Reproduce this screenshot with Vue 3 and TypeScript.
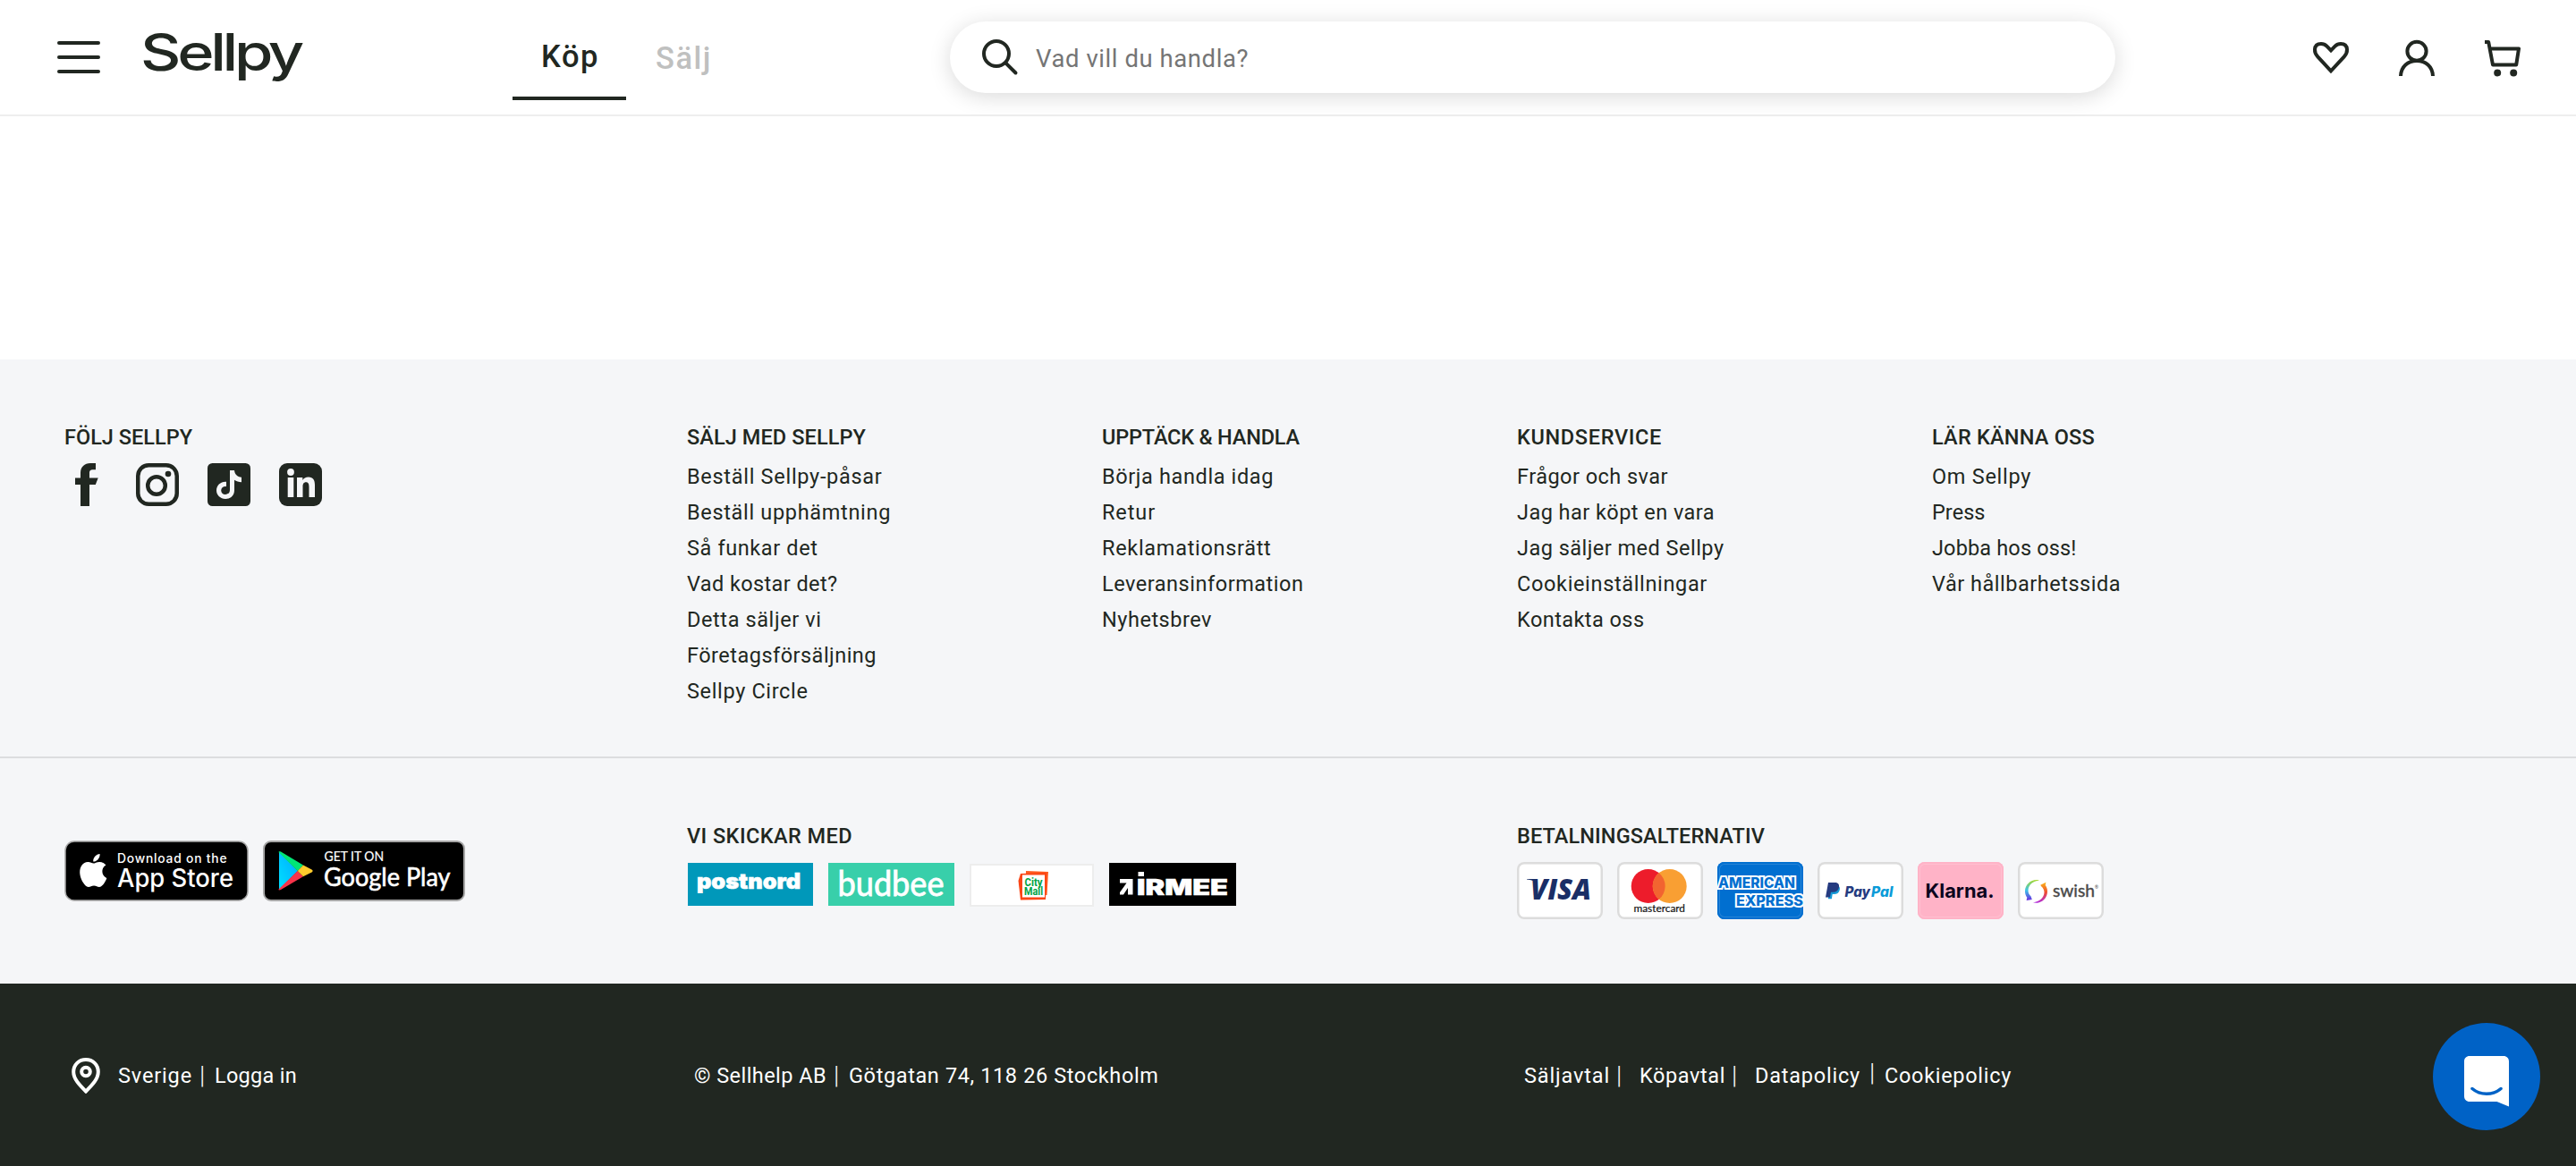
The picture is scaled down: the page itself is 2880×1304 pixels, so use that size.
<script setup lang="ts">
interface FittedText {
  text: string
  width: number
}
interface LinkColumn {
  title: FittedText
  links: FittedText[]
}

const t = (text: string, width: number): FittedText => ({ text, width })

// Tracks a label so that it takes up the given advance width.
function track(el: HTMLElement, width: number) {
  el.style.letterSpacing = '0px'
  const natural = el.getBoundingClientRect().width
  const count = (el.textContent ?? '').trim().length
  if (count > 0) el.style.letterSpacing = `${((width - natural) / count).toFixed(3)}px`
}
const vFit = {
  mounted: (el: HTMLElement, binding: { value: number }) => track(el, binding.value),
}

const columns: LinkColumn[] = [
  {
    title: t('SÄLJ MED SELLPY', 200),
    links: [
      t('Beställ Sellpy-påsar', 218.5),
      t('Beställ upphämtning', 228),
      t('Så funkar det', 146.5),
      t('Vad kostar det?', 168.5),
      t('Detta säljer vi', 150.5),
      t('Företagsförsäljning', 212),
      t('Sellpy Circle', 135.5),
    ],
  },
  {
    title: t('UPPTÄCK & HANDLA', 221),
    links: [
      t('Börja handla idag', 192),
      t('Retur', 60),
      t('Reklamationsrätt', 189.5),
      t('Leveransinformation', 225.5),
      t('Nyhetsbrev', 123),
    ],
  },
  {
    title: t('KUNDSERVICE', 162),
    links: [
      t('Frågor och svar', 169),
      t('Jag har köpt en vara', 221),
      t('Jag säljer med Sellpy', 231.5),
      t('Cookieinställningar', 213),
      t('Kontakta oss', 142.5),
    ],
  },
  {
    title: t('LÄR KÄNNA OSS', 182),
    links: [
      t('Om Sellpy', 111),
      t('Press', 59.5),
      t('Jobba hos oss!', 161.5),
      t('Vår hållbarhetssida', 211),
    ],
  },
]
</script>

<template>
  <div class="page">
    <header class="header">
      <button class="menu" aria-label="Meny"><i></i><i></i><i></i></button>
      <svg class="logo" width="184" height="80" viewBox="0 0 184 80">
        <text x="-1" y="48" textLength="179" lengthAdjust="spacingAndGlyphs">Sellpy</text>
      </svg>
      <nav class="tabs">
        <a class="tab active"><span v-fit="65">Köp</span></a>
        <a class="tab"><span v-fit="63">Sälj</span></a>
      </nav>
      <div class="search">
        <svg width="48" height="48" viewBox="0 0 48 48" fill="none" stroke="#212721" stroke-width="4" stroke-linecap="round">
          <circle cx="20" cy="20" r="14" />
          <path d="M30.3 30.3 41.500 41.500" />
        </svg>
        <span v-fit="238" class="placeholder">Vad vill du handla?</span>
      </div>
      <div class="actions">
        <svg width="48" height="48" viewBox="0 0 48 48" fill="none" stroke="#212721" stroke-width="4">
          <path d="M24 39.3 9.2 23.4C6.8 20.8 5.8 18.3 6 15.2 6.3 10.700 9.200 9 13 9c2.600 0 4.400.7 6.400 2.700L24 16.300l4.600-4.600C30.600 9.700 32.400 9 35 9c3.800 0 6.700 1.700 7 6.200.2 3.100-.8 5.600-3.200 8.200Z" />
        </svg>
        <svg width="48" height="48" viewBox="0 0 48 48" fill="none" stroke="#212721" stroke-width="4">
          <ellipse cx="24" cy="17.300" rx="10.600" ry="10.500" />
          <path d="M6 45C6.500 34.500 14 28 24 28s17.500 6.500 18 17" />
        </svg>
        <svg width="48" height="48" viewBox="0 0 48 48" fill="none" stroke="#212721" stroke-width="4" stroke-linejoin="round">
          <path d="M4 7h4.200l4.800 25.500h26.200L42 14.500H10" />
          <circle cx="18.200" cy="41.500" r="4" fill="#212721" stroke="none" />
          <circle cx="36.200" cy="41.500" r="4" fill="#212721" stroke="none" />
        </svg>
      </div>
    </header>

    <main class="content"></main>

    <footer>
      <section class="links">
        <div>
          <h4><span v-fit="143">FÖLJ SELLPY</span></h4>
          <div class="social">
            <svg width="48" height="48" viewBox="0 0 48 48" fill="#212721">
              <path d="M18 48V24h-6v-7.500h6V11C18 4 22.500 0 29 0h6v7.200h-3.500c-2.500 0-3.500 1.300-3.500 3.600v5.700h9.700L34.800 24H28v24Z" />
            </svg>
            <svg width="48" height="48" viewBox="0 0 48 48" fill="none" stroke="#212721" stroke-width="4.500">
              <rect x="2.250" y="2.250" width="43.500" height="43.500" rx="12" />
              <circle cx="23" cy="25" r="9.800" />
              <circle cx="36" cy="12" r="3.300" fill="#212721" stroke="none" />
            </svg>
            <svg width="48" height="48" viewBox="0 0 48 48">
              <rect width="48" height="48" rx="5.500" fill="#212721" />
              <path d="M25 8h5c.4 4.300 3.200 7.400 8 7.800v5.400c-3 0-5.700-.9-8-2.500v11.500C30 36.500 25.500 40 20 40S10 35.700 10 30.500c0-5.800 4.800-10.300 11-9.800v5.300c-3.200-.5-5.800 1.500-5.800 4.400 0 2.600 2 4.500 4.700 4.500 3 0 5.100-1.900 5.100-5Z" fill="#f5f6f8" />
            </svg>
            <svg width="48" height="48" viewBox="0 0 48 48">
              <rect width="48" height="48" rx="9" fill="#212721" />
              <g fill="#f5f6f8">
                <circle cx="13" cy="10" r="3.900" />
                <path d="M9.700 16h6.600v22H9.700ZM20 16h6.300v3c1.200-2 3.500-3.500 6.500-3.500 5.500 0 7.200 3.600 7.200 9V38h-6.500V26.500c0-3-.6-5.300-3.300-5.300-2.900 0-3.700 2.200-3.700 5.200V38H20Z" />
              </g>
            </svg>
          </div>
        </div>
        <div v-for="col in columns" :key="col.title.text">
          <h4><span v-fit="col.title.width">{{ col.title.text }}</span></h4>
          <ul>
            <li v-for="link in col.links" :key="link.text"><span v-fit="link.width">{{ link.text }}</span></li>
          </ul>
        </div>
      </section>

      <section class="partners">
        <div class="stores">
          <svg width="206" height="68" viewBox="0 0 206 68">
            <rect x="1" y="1" width="204" height="66" rx="10" stroke="#a6a6a6" stroke-width="1.500" />
            <path transform="translate(13.800 15) scale(1.540)" fill="#fff" d="M12.152 6.896c-.948 0-2.415-1.078-3.960-1.040-2.040.027-3.910 1.183-4.961 3.014-2.117 3.675-.546 9.103 1.519 12.090 1.013 1.454 2.208 3.090 3.792 3.039 1.520-.065 2.090-.987 3.935-.987 1.831 0 2.350.987 3.960.948 1.637-.026 2.676-1.480 3.676-2.948 1.156-1.688 1.636-3.325 1.662-3.415-.039-.013-3.182-1.221-3.220-4.857-.026-3.040 2.480-4.494 2.597-4.559-1.429-2.090-3.623-2.324-4.390-2.376-2-.156-3.675 1.090-4.610 1.090zM15.530 3.830c.843-1.012 1.400-2.427 1.245-3.830-1.207.052-2.662.805-3.532 1.818-.78.896-1.454 2.338-1.273 3.714 1.338.104 2.715-.688 3.559-1.701" />
            <g fill="#fff" font-family="Inter, sans-serif" font-weight="500">
              <text x="59" y="25" font-size="13.800" textLength="122.500">Download on the</text>
              <text x="59" y="52" font-size="28" textLength="130" lengthAdjust="spacingAndGlyphs">App Store</text>
            </g>
          </svg>
          <svg width="226" height="68" viewBox="0 0 226 68">
            <defs>
              <linearGradient id="play-blue" x1="1" y1="0" x2="0" y2="1">
                <stop offset="0" stop-color="#00a8ff" />
                <stop offset="1" stop-color="#00e0ff" />
              </linearGradient>
            </defs>
            <rect x="1" y="1" width="224" height="66" rx="8" stroke="#a6a6a6" stroke-width="2" />
            <path d="M18 12.500 39 34 18 55Z" fill="url(#play-blue)" />
            <path d="M17.500 13c0-1 1.500-1 2.500-.4L45 27.500 38.700 34Z" fill="#00e676" />
            <path d="M17.500 54.500c0 1.200 1.500 1 2.500.4L45 40.200 38.700 34Z" fill="#f8334a" />
            <path d="M45 27.500 54.500 32.500c1.500.9 1.500 2 0 2.900L45 40.200 38.700 34Z" fill="#ffcb2d" />
            <g fill="#fff" stroke="#fff" font-family="Lato, sans-serif">
              <text x="68.500" y="23" font-size="14.500" stroke-width=".2" textLength="66.500" lengthAdjust="spacingAndGlyphs">GET IT ON</text>
              <text x="68" y="51" font-size="28.500" stroke-width=".6" textLength="141.500" lengthAdjust="spacingAndGlyphs">Google Play</text>
            </g>
          </svg>
        </div>

        <div>
          <h4><span v-fit="185">VI SKICKAR MED</span></h4>
          <div class="carriers">
            <svg width="140" height="48" viewBox="0 0 140 48">
              <rect width="140" height="48" fill="#0098ba" />
              <text x="10" y="29.300" fill="#fff" stroke="#fff" stroke-width=".6" font-family="Inter, sans-serif" font-size="24" font-weight="900" textLength="116" lengthAdjust="spacingAndGlyphs">postnord</text>
            </svg>
            <svg width="141" height="48" viewBox="0 0 141 48">
              <rect width="141" height="48" fill="#38cfaa" />
              <text x="10.500" y="37" fill="#fff" stroke="#fff" stroke-width=".8" font-family="Lato, sans-serif" font-size="38" textLength="119" lengthAdjust="spacingAndGlyphs">budbee</text>
            </svg>
            <svg width="139" height="49" viewBox="0 0 139 49">
              <rect x="1" y="2" width="137" height="46" fill="#fff" stroke="#ededed" stroke-width="2" />
              <path d="m63 9 25 1-1.500 26H63Z" fill="#ff5a1f" />
              <path d="M54.500 20 57 12l29-1-1 30-28 .5Z" fill="#fa4616" />
              <path d="M59 13.500h25v25H59Z" fill="#fff" />
              <g fill="#00a443" font-family="Roboto, sans-serif" font-size="12.500" font-weight="700">
                <text x="61.500" y="25.500" textLength="20" lengthAdjust="spacingAndGlyphs">City</text>
                <text x="61" y="35.500" textLength="21" lengthAdjust="spacingAndGlyphs">Mail</text>
              </g>
            </svg>
            <svg width="142" height="48" viewBox="0 0 142 48">
              <rect width="142" height="48" />
              <path d="M12 18h14.500v17.500h-5.500V28l-5 7.500h-4v-2.500l7.500-10.500H12Z" fill="#fff" />
              <path d="M32.500 10h6.500v5h-6.500Z" fill="#fff" />
              <text x="31" y="36" fill="#fff" stroke="#fff" stroke-width=".5" font-family="Inter, sans-serif" font-size="24" font-weight="900" textLength="102" lengthAdjust="spacingAndGlyphs">IRMEE</text>
            </svg>
          </div>
        </div>

        <div>
          <h4><span v-fit="277">BETALNINGSALTERNATIV</span></h4>
          <div class="payments">
            <div class="card">
              <svg width="96" height="64" viewBox="0 0 96 64" fill="#1a2e66">
                <path d="M11 19h9l2 5c-3-3-6-4-11-4.400Z" />
                <text x="15" y="42" font-family="'Open Sans', sans-serif" font-size="32" font-style="italic" font-weight="800" textLength="68" lengthAdjust="spacingAndGlyphs">VISA</text>
              </svg>
            </div>
            <div class="card">
              <svg width="96" height="64" viewBox="0 0 96 64">
                <circle cx="34.700" cy="27" r="19" fill="#ed1c2b" />
                <circle cx="58.700" cy="27" r="19" fill="#f99f33" />
                <path d="M46.700 12.300a19 19 0 0 1 0 29.400 19 19 0 0 1 0-29.400Z" fill="#f26430" />
                <text x="18.500" y="55.500" fill="#111" stroke="#111" stroke-width=".2" font-family="Lato, sans-serif" font-size="11.500" textLength="57.500" lengthAdjust="spacingAndGlyphs">mastercard</text>
              </svg>
            </div>
            <div class="card amex">
              <svg width="96" height="64" viewBox="0 0 96 64" font-family="Inter, sans-serif" font-size="15.500" font-weight="800" fill="#016fd0" stroke="#fff" stroke-width="4" paint-order="stroke">
                <text x="1" y="29" textLength="86" lengthAdjust="spacingAndGlyphs">AMERICAN</text>
                <text x="21" y="48.500" textLength="75" lengthAdjust="spacingAndGlyphs">EXPRESS</text>
              </svg>
            </div>
            <div class="card">
              <svg width="96" height="64" viewBox="0 0 96 64">
                <path d="M14 26h6.500c4 0 5 2.700 4.200 5.500-.8 3-3 4.500-6 4.500h-2l-.8 5.300h-4Z" fill="#179bd7" />
                <path d="M12 23h7.500c4 0 5.200 2.500 4.400 5.700-.8 3.300-3.200 5-6.600 5h-2.300l-1.100 5.800H9Z" fill="#253b80" />
                <g font-family="Inter, sans-serif" font-size="15.500" font-style="italic" font-weight="800">
                  <text x="30.500" y="39" fill="#253b80" textLength="28.500" lengthAdjust="spacingAndGlyphs">Pay</text>
                  <text x="60" y="39" fill="#0a9bd8" textLength="24.500" lengthAdjust="spacingAndGlyphs">Pal</text>
                </g>
              </svg>
            </div>
            <div class="card klarna">
              <svg width="96" height="64" viewBox="0 0 96 64">
                <text x="8.500" y="40.300" fill="#0b051d" font-family="Inter, sans-serif" font-size="22" font-weight="700" textLength="77" lengthAdjust="spacingAndGlyphs">Klarna.</text>
              </svg>
            </div>
            <div class="card">
              <svg width="96" height="64" viewBox="0 0 96 64">
                <defs>
                  <linearGradient id="swish-left" x1="0" y1="0" x2="0" y2="1">
                    <stop offset="0" stop-color="#a8d82c" />
                    <stop offset=".5" stop-color="#3cc4e8" />
                    <stop offset="1" stop-color="#6a2be0" />
                  </linearGradient>
                  <linearGradient id="swish-right" x1="0" y1="0" x2="0" y2="1">
                    <stop offset="0" stop-color="#fbb617" />
                    <stop offset=".5" stop-color="#ee4a33" />
                    <stop offset="1" stop-color="#b02ee0" />
                  </linearGradient>
                </defs>
                <path d="M24 20.500c-8-2-16 4-16 12.300 0 2.600.8 5 2.300 7l-.7 3.200 6.200-1-1.200-3.600c-2.300-2-3.400-4.500-3-7.600.5-5 5.200-9.500 12.400-10.300Z" fill="url(#swish-left)" />
                <path d="M17 45.300c8 2 16-4 16-12.300 0-2.600-.8-5-2.300-7l.7-3.200-6.200 3 1.200 1.600c2.300 2 3.400 4.500 3 7.600-.5 5-5.200 9.500-12.400 10.300Z" fill="url(#swish-right)" />
                <text x="39" y="38.500" fill="#4a4a4a" stroke="#4a4a4a" stroke-width=".4" font-family="Lato, sans-serif" font-size="18.500" textLength="47" lengthAdjust="spacingAndGlyphs">swish</text>
                <text x="85.700" y="30" fill="#4a4a4a" font-family="Lato, sans-serif" font-size="5.500">®</text>
              </svg>
            </div>
          </div>
        </div>
      </section>

      <section class="legal">
        <div class="row region">
          <svg width="40" height="40" viewBox="0 0 40 40" fill="none" stroke="#fff" stroke-width="4">
            <path d="M20 37.500C13.500 31 6.200 24 6.200 15.800 6.200 7.800 12.300 2 20 2s13.800 5.800 13.800 13.800c0 8.200-7.300 15.200-13.800 21.700Z" />
            <circle cx="20" cy="15.500" r="4.800" />
          </svg>
          <span v-fit="83">Sverige</span><i class="bar">|</i><span v-fit="92">Logga in</span>
        </div>
        <div class="row">
          <span v-fit="148">© Sellhelp AB</span><i class="bar">|</i><span v-fit="346.500">Götgatan 74, 118 26 Stockholm</span>
        </div>
        <div class="row">
          <span v-fit="96">Säljavtal</span><i class="bar wide">|</i><span v-fit="96">Köpavtal</span><i class="bar wide">|</i><span v-fit="118">Datapolicy</span><i class="bar raised">|</i><span v-fit="142">Cookiepolicy</span>
        </div>
      </section>
    </footer>

    <button class="chat" aria-label="Chatt">
      <svg width="120" height="120" viewBox="0 0 120 120">
        <path d="M41 37h38c3.500 0 6 2.500 6 6v50.500L71.500 88H41c-3.500 0-6-2.500-6-6V43c0-3.500 2.500-6 6-6Z" fill="#fff" />
        <path d="M44 73.500c9 7.700 23 7.700 32 0" fill="none" stroke="#0062c6" stroke-width="3.500" stroke-linecap="round" />
      </svg>
    </button>
  </div>
</template>

<style>
body {
  margin: 0;
  background: #fff;
}
</style>

<style scoped>
.page {
  position: relative;
  display: flex;
  flex-direction: column;
  width: 2880px;
  height: 1304px;
  overflow: hidden;
  color: #212721;
  font-family: Roboto, 'Liberation Sans', sans-serif;
  font-size: 23.5px;
  line-height: 40px;
}
svg {
  display: block;
  flex: none;
}
button {
  border: 0;
  padding: 0;
  background: none;
}
span {
  white-space: nowrap;
}
.header {
  display: flex;
  box-sizing: border-box;
  height: 130px;
  padding-left: 64px;
  border-bottom: 2px solid #eee;
}
.menu {
  display: flex;
  flex-direction: column;
  gap: 12px;
  width: 48px;
  padding-top: 46px;
}
.menu i {
  height: 4px;
  border-radius: 2px;
  background: #212721;
}
.logo {
  overflow: visible;
  margin: 31px 0 0 46px;
  font-family: Inter, sans-serif;
  font-size: 57px;
  font-weight: 500;
  letter-spacing: -3.5px;
  line-height: 64px;
  fill: #212721;
}
.tabs {
  display: flex;
  width: 489px;
  margin-left: 231px;
}
.tab {
  box-sizing: border-box;
  width: 127px;
  height: 112px;
  padding: 45px 0 0 2px;
  font-size: 34.5px;
  font-weight: 500;
  line-height: 40px;
  text-align: center;
  color: #bfc0bf;
}
.tab.active {
  padding-top: 43px;
  border-bottom: 4px solid #212721;
  color: #212721;
}
.search {
  display: flex;
  align-items: center;
  box-sizing: border-box;
  width: 1303px;
  height: 80px;
  margin-top: 24px;
  padding-left: 32px;
  border-radius: 40px;
  box-shadow: 0 4px 24px rgba(0, 0, 0, 0.15);
}
.placeholder {
  margin: 3px 0 0 16px;
  font-size: 27.5px;
  color: #757575;
}
.actions {
  display: flex;
  gap: 48px;
  margin: 40px 0 0 217px;
}
.content {
  height: 272px;
}
footer {
  display: flex;
  flex: 1;
  flex-direction: column;
  background: #f5f6f8;
}
.links {
  display: grid;
  grid-template-columns: 696px repeat(4, 464px);
  box-sizing: border-box;
  height: 446px;
  padding: 67px 0 0 72px;
  border-bottom: 2px solid #dcdddf;
}
h4 {
  margin: 0;
  font-size: 23.5px;
  font-weight: 500;
}
ul {
  margin: 4px 0 0;
  padding: 0;
  list-style: none;
}
.social {
  display: flex;
  gap: 32px;
  margin-top: 9px;
}
.partners {
  display: grid;
  grid-template-columns: 696px 928px auto;
  box-sizing: border-box;
  height: 252px;
  padding: 67px 0 0 72px;
}
.stores {
  display: flex;
  gap: 16px;
  margin-top: 25px;
}
.carriers {
  display: flex;
  gap: 17px;
  margin: 10px 0 0 1px;
}
.payments {
  display: flex;
  gap: 16px;
  margin-top: 9px;
}
.card {
  width: 96px;
  height: 64px;
  border-radius: 8px;
  overflow: hidden;
  background: #fff;
  box-shadow: inset 0 0 0 2.5px #dcdcdc;
}
.amex {
  background: #016fd0;
  box-shadow: inset 0 0 0 2px #016fd0, inset 0 0 0 3px #2783d6;
}
.klarna {
  background: #ffb3c7;
  box-shadow: inset 0 0 0 2px #ffb3c7, inset 0 0 0 3px #ffbfd0;
}
.legal {
  display: grid;
  flex: 1;
  grid-template-columns: 700px 928px auto;
  padding: 83px 0 0 76px;
  background: #212721;
  color: #fff;
}
.row {
  display: flex;
  height: 40px;
}
.region svg {
  margin-right: 16px;
}
.bar {
  width: 12px;
  margin: 0 8px 0 5px;
  font-size: 28px;
  font-style: normal;
  font-weight: 300;
  line-height: 40px;
  text-align: center;
}
.bar.wide {
  margin: 0 17px 0 4px;
}
.bar.raised {
  margin: -3px 8px 0 7px;
}
.chat {
  position: absolute;
  right: 40px;
  bottom: 40px;
  width: 120px;
  height: 120px;
  border-radius: 50%;
  background: #0062c6;
}
</style>
